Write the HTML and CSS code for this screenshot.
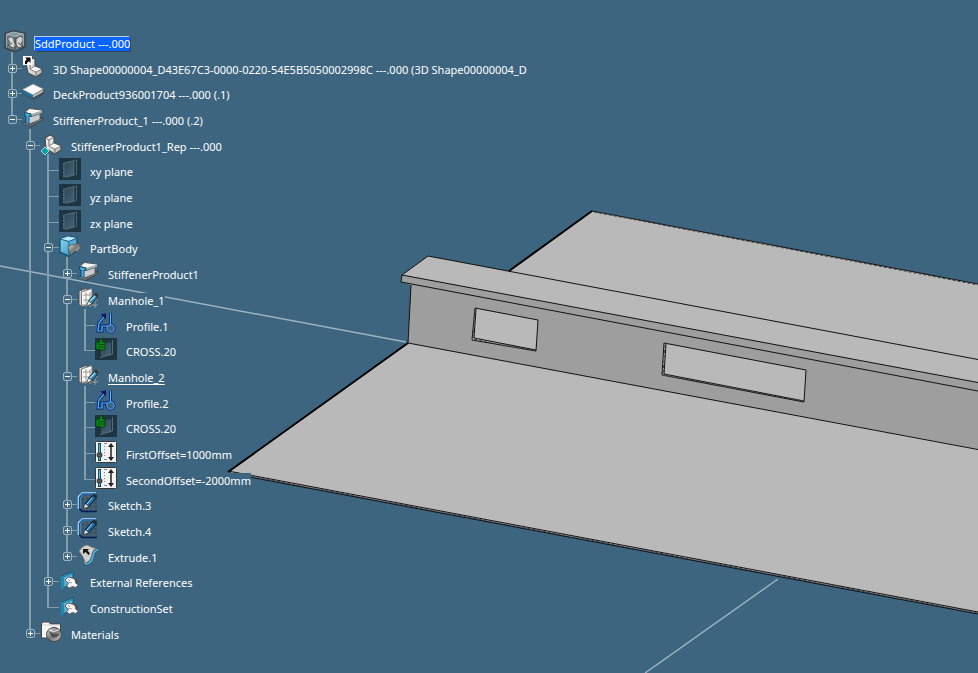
FILE: index.html
```html
<!DOCTYPE html>
<html lang="en">
<head>
<meta charset="utf-8">
<title>SddProduct</title>
<link rel="stylesheet" href="styles.css">
</head>
<body>
<svg class="defs" aria-hidden="true">
  <defs>
    <linearGradient id="steel" x1="0" y1="0" x2="1" y2="1"><stop offset="0" stop-color="#ffffff"/><stop offset="1" stop-color="#b5b5b5"/></linearGradient>
    <linearGradient id="dark-steel" x1="0" y1="0" x2="1" y2="1"><stop offset="0" stop-color="#e8e8e8"/><stop offset=".5" stop-color="#777"/><stop offset="1" stop-color="#d0d0d0"/></linearGradient>
    <linearGradient id="cyan" x1="0" y1="0" x2="1" y2="1"><stop offset="0" stop-color="#8fdcf7"/><stop offset="1" stop-color="#2b88b8"/></linearGradient>
    <linearGradient id="glass" x1="0" y1="0" x2="1" y2="1"><stop offset="0" stop-color="#2c4656"/><stop offset="1" stop-color="#466375"/></linearGradient>
  </defs>
  <symbol id="i-root" viewBox="0 0 22 22">
    <path d="M9 .8 21 3.500V17L11 21.500 1 18V3.500Z" fill="#6d818d" stroke="#3b4449" stroke-width="1.600"/>
    <path d="M9 2 19.500 4 11 6.500 2.500 4.200Z" fill="#8797a0" stroke="#b9c4ca" stroke-width=".7"/>
    <path d="M4 8 7 6.500 10 9v3l2 2v3l-3 1-5-3 2-3-2-2ZM12 9l4-3 3 2v3l-2 2 2 3-4 2-3-3Z" fill="#cfcfcf" stroke="#444" stroke-width=".8"/>
    <path d="M11 7V21M2 17 8 13M14 13l6 4" fill="none" stroke="#40484c" stroke-width=".9"/>
    <path d="M2.500 5v12M19.500 5v11" stroke="#a4b1b9" stroke-width=".8"/>
  </symbol>
  <symbol id="i-seat" viewBox="0 0 22 22">
    <path d="M4 5 9 2l4 2v6l7 3v4l-6 4-9-5Z" fill="url(#steel)" stroke="#4c4c4c" stroke-width="1.200"/>
    <path d="M4 5l4 2v6l6 3v5M8 7l5-3M8 13l5-3M14 16l6-3" fill="none" stroke="#707070" stroke-width="1"/>
    <path d="M8.500 13 13 10.500 19 13 14 15.500Z" fill="#f5f5f5"/>
  </symbol>
  <symbol id="i-shape" viewBox="0 0 22 22">
    <path d="M4 7 9 2l4 1v7l7 3v4l-6 4-8-4Z" fill="url(#steel)" stroke="#4c4c4c" stroke-width="1.200"/>
    <path d="M8 8v5l6 3v5M8 13l5-3M14 16l6-3" fill="none" stroke="#707070"/>
    <path d="M8.500 13 13 10.500 19 13 14 15.500Z" fill="#f5f5f5"/>
    <path d="M1 0h9v9H1Z" fill="#fff"/><path d="M3 1.500h5.500V7L6.800 5.300 5 7v1H3V5.500L4.700 3.200Z" fill="#000"/>
  </symbol>
  <symbol id="i-rep" viewBox="0 0 22 22">
    <use href="#i-seat" x="1" width="22" height="22"/>
    <path d="M5 14 9 18 5 22 1 18Z" fill="#00a7a7" stroke="#e6f3f3" stroke-width=".7"/>
  </symbol>
  <symbol id="i-deck" viewBox="0 0 22 22">
    <path d="M0 9v4l11 6 11-6V9Z" fill="#4a4a4a"/><path d="M.5 9v3.500L11 18v-4Z" fill="#167299"/>
    <path d="M11 14.500v2L21 11V9Z" fill="#c4c4c4"/>
    <path d="M.5 8.500 11 3l10.500 5L11 14Z" fill="#fafafa" stroke="#7d8d92" stroke-width=".8"/>
  </symbol>
  <symbol id="i-stiff" viewBox="0 0 22 22">
    <path d="M0 15.500 7 13l14.500-3.500v3L9 20.500Z" fill="#43484b"/>
    <path d="M6.500 8v9.500L18 12.500V5Z" fill="#c9cdcf" stroke="#555" stroke-width=".8"/>
    <path d="M2.500 5.500 7.500 1.500 20 3v3L9 9.500V7Z" fill="#f6f6f6" stroke="#4f5658"/>
    <path d="M9 7 20 3.500v2.300L9 9.300Z" fill="#a7adaf"/>
    <path d="M2.500 5.500 9 7v2.500L7 9v8.500L4 16V9l-1.500-.5Z" fill="#45add6" stroke="#0d4360" stroke-width=".9"/>
    <path d="M2 16 8.500 18.500 20 12" fill="none" stroke="#8a9194" stroke-width=".8"/>
  </symbol>
  <symbol id="i-plane" viewBox="0 0 22 22">
    <path d="M0 0h22v22H0Z" fill="#1f3441"/>
    <path d="M5 5 15 3v14L5 19Z" fill="url(#glass)" stroke="#607c8c" stroke-width=".6"/>
    <path d="M7 4.500 17.500 2v14.500L7 19.500" fill="none" stroke="#49687b" stroke-width=".8"/>
    <path d="M4.500 5v14M17.500 2v14" stroke="#4e7185" stroke-width=".8" stroke-dasharray="3 1"/>
  </symbol>
  <symbol id="i-body" viewBox="0 0 22 22">
    <path d="M1 4 9 1l9 2v13l-8 5-9-4Z" fill="url(#cyan)" stroke="#124c68" stroke-width="1.200"/>
    <path d="M1.500 4 9 1.500 17.500 3 10 6Z" fill="#b9eafb"/><path d="M1 4l9 2.500 8-3.300M10 6.500V21" fill="none" stroke="#19607f" stroke-width="1"/>
    <path d="M9 12l4-3 2 1 5-2 1.500 5L18 17l-2-1-4 4-2-4Z" fill="url(#dark-steel)" stroke="#4e4e4e" stroke-width=".8"/>
  </symbol>
  <symbol id="i-manhole" viewBox="0 0 22 22">
    <path d="M2 4 10 1v16l-6 2-2-1Z" fill="#d5d5d5" stroke="#4d4d4d"/><path d="M4.500 5 14.500 1.500 15 3v13L4.500 19.500Z" fill="#fafafa" stroke="#666" stroke-width=".9"/>
    <path d="M6 8h15M6 13h15M5 18h16M9 5v15M13 5v15M18 6v15" stroke="#9b9b9b" stroke-width="1" fill="none"/>
    <path d="M10 19l1.500-5 6-7 3.500 3-6.500 7Z" fill="#2d83ab" stroke="#222"/><path d="M17 7l2-1.500 2.500 2.500L20 10Z" fill="#333"/><path d="M10 19l1.500-4.500 3 2Z" fill="#f5e2ce"/><path d="M13 14l5-5" stroke="#a9e3fa" stroke-width="1.300"/>
  </symbol>
  <symbol id="i-profile" viewBox="0 0 22 22">
    <g fill="none" stroke-linejoin="miter">
      <path d="M9.500 3.500 4 10 3 18H7V13h5l1 3M15.500.5V12" stroke="#10156e" stroke-width="2.800"/>
      <circle cx="15.500" cy="15.500" r="3.700" stroke="#10156e" stroke-width="2.800"/>
      <path d="M9.500 3.500 4 10 3 18H7V13h5l1 3M15.500.5V12" stroke="#45c4f5" stroke-width="1.200"/>
      <circle cx="15.500" cy="15.500" r="3.700" fill="#3d657f" stroke="#4a9cf5" stroke-width="1.200"/>
    </g>
    <path d="M5.500 1.500 11 .3V6Z" fill="#10156e"/>
  </symbol>
  <symbol id="i-cross" viewBox="0 0 22 22">
    <path d="M0 0h22v22H0Z" fill="#1f3441"/>
    <path d="M6 6 16 4v13L6 19Z" fill="url(#glass)"/><path d="M5 20 7 19 17.500 16V2" fill="none" stroke="#54758a" stroke-width=".9"/>
    <path d="M1 4h3l2-3.500h2L7 4h3v8H4l-3-1Z" fill="#0b8a16" stroke="#05350a" stroke-width=".8"/><path d="M4 4v8M5 6.500h5M5 9h5" stroke="#054a0b"/>
  </symbol>
  <symbol id="i-param" viewBox="0 0 22 22">
    <rect x=".5" y=".5" width="21" height="21" rx="1" fill="#f3f3f3" stroke="#363636"/>
    <path d="M4.500 2v18" stroke="#10394c" stroke-width="3"/><path d="M4.500 3v16" stroke="#54b7e6" stroke-width="1.400"/>
    <rect x="2" y="12" width="5" height="4" rx="1" fill="#555" stroke="#1d1d1d" stroke-width=".6"/>
    <path d="M9 2.500h3M9 5.500h1M9 8.500h1M9 11.500h1M9 14.500h1M9 18.500h3" stroke="#888"/>
    <path d="M16 4v14" stroke="#222" stroke-width="1.500"/><path d="M13 6 16 2l3 4ZM13 16l3 4 3-4Z" fill="#222"/>
  </symbol>
  <symbol id="i-sketch" viewBox="0 0 22 22">
    <path d="M5 2h15v17H5Z" fill="#3a5364"/><path d="M5 5h15M5 9h15M5 13h15M5 17h15M8 2v17M12 2v17M16 2v17" stroke="#536c7b" stroke-width=".7"/>
    <path d="M2 17V5L5.500 1.500H19" stroke="#b7dcf2" stroke-width="2.600" fill="none"/>
    <path d="M2.500 17V5.500L5.500 2H19" stroke="#0754a3" stroke-width="1.300" fill="none"/><path d="M2.500 16.500 5 19.500H20" stroke="#071b5a" stroke-width="1.600" fill="none"/>
    <path d="M7 16l1-4 8-9 3.500 3-8 8.500Z" fill="#176daa" stroke="#111"/><path d="M15 3.500l2-2 3.300 2.500L18.500 6.500Z" fill="#292929"/><path d="M7 16l1-4 3.300 2.800Z" fill="#f6ead7"/><path d="M10 12l5-6" stroke="#a7e1ff"/>
  </symbol>
  <symbol id="i-extrude" viewBox="0 0 22 22">
    <path d="M2 7Q6 1 10 1q4 2 7 3 2 0 4 2-4 0-5 3-2 10-7 11-3-1-1-3-3-6-6-10Z" fill="#d3d1cc" stroke="#777" stroke-width=".8"/>
    <path d="M9 20q6-1 7-8 1-6 5-6" stroke="#1e5775" stroke-width="3.500" fill="none"/><path d="M9 20q6-1 7-8 1-6 5-6" stroke="#5aa9cf" stroke-width="2" fill="none"/>
    <path d="M6 5h6l-1.500 1.500L13 9.500 11.500 11 8.500 8 6 10Z" fill="#171717"/>
  </symbol>
  <symbol id="i-set" viewBox="0 0 22 22">
    <path d="M3 7 14 2.500v12L3 19.500Z" fill="url(#cyan)" stroke="#12516e"/><path d="M2.500 7v12.500l2-1V8L14 4" fill="none" stroke="#2089ae" stroke-width="1.500"/>
    <path d="M6 11l3-3 4 1 3 1 1.500 2-1 2 3 2-3 2.500-3-1-3 1.500-3-2 2-2.500Z" fill="#f7f7f7" stroke="#555" stroke-width=".9"/><path d="M15 10l2-.5 3 4-2.500 1.500Z" fill="#4f4f4f"/><path d="M9 13l4 1M9 10l2 2" stroke="#777" stroke-width=".7"/>
  </symbol>
  <symbol id="i-material" viewBox="0 0 22 22">
    <path d="M1.500 3l1-2h6l2 2h10v14h-19Z" fill="#f8f8f8" stroke="#444"/><path d="M2 4h18" stroke="#ccc"/>
    <ellipse cx="14" cy="13.500" rx="7.500" ry="7" fill="url(#dark-steel)" stroke="#434343"/><path d="M8 9q4 5 12 4-4 5-8 3Z" fill="#4f4f4f"/><path d="M9 9q4 3 10 0" stroke="#eee" fill="none"/>
  </symbol>
</svg>

<main class="viewport">
  <svg class="scene" viewBox="0 0 978 673" preserveAspectRatio="xMinYMin slice" role="img" aria-label="Deck plate with stiffener">
    <path class="axis" d="M0 266 406 342M645 673 778 579"/>
    <path class="light" d="M592 211 978 284V613L228 472 408 343 509 271Z"/>
    <path class="web" d="M401 282 978 391V449L408 343 411 285Z"/>
    <path class="light" d="M428 256 978 359.500V382.500L402 275Z"/>
    <path class="web" d="M402 275 978 382.500V391L401 282Z"/>
    <path class="light" d="M475 308 538 320 536 351 472 340ZM664 343 806 370 804 402 662 375Z"/>
    <path class="edge" d="M592 211 978 284M428 256 978 359.500M402 275 978 382.500M401 282 978 391M408 343 978 449.500M428 256 402 275 401 282M411 285 408 343M228 471 978 612M228 473 978 614M475 308 538 320 536 351 472 340ZM476 309 474 338 536 350M664 343 806 370 804 402 662 375ZM666 344 664 374 804 401"/>
    <path class="rim" d="M592 211 509 271M408 343 228 472"/>
    <path class="shade" d="M594 212 978 285M228 472 978 613M475 310 473 339M474 339 536 351M665 345 663 374M663 375 804 401"/>
  </svg>

  <ul class="tree">
    <li class="row"><svg class="icon"><use href="#i-root"/></svg><span class="label selected">SddProduct ---.000</span></li>
    <li class="row"><span class="guide tee"><button class="toggle closed" aria-label="Expand"></button></span><svg class="icon"><use href="#i-shape"/></svg><span class="label">3D Shape00000004_D43E67C3-0000-0220-54E5B5050002998C ---.000 (3D Shape00000004_D</span></li>
    <li class="row"><span class="guide tee"><button class="toggle closed" aria-label="Expand"></button></span><svg class="icon"><use href="#i-deck"/></svg><span class="label">DeckProduct936001704 ---.000 (.1)</span></li>
    <li class="row"><span class="guide tee end"><button class="toggle" aria-label="Collapse"></button></span><svg class="icon"><use href="#i-stiff"/></svg><span class="label">StiffenerProduct_1 ---.000 (.2)</span></li>
    <li class="row"><span class="guide blank"></span><span class="guide tee"><button class="toggle" aria-label="Collapse"></button></span><svg class="icon"><use href="#i-rep"/></svg><span class="label">StiffenerProduct1_Rep ---.000</span></li>
    <li class="row"><span class="guide blank"></span><span class="guide"></span><span class="guide tee"></span><svg class="icon"><use href="#i-plane"/></svg><span class="label">xy plane</span></li>
    <li class="row"><span class="guide blank"></span><span class="guide"></span><span class="guide tee"></span><svg class="icon"><use href="#i-plane"/></svg><span class="label">yz plane</span></li>
    <li class="row"><span class="guide blank"></span><span class="guide"></span><span class="guide tee"></span><svg class="icon"><use href="#i-plane"/></svg><span class="label">zx plane</span></li>
    <li class="row"><span class="guide blank"></span><span class="guide"></span><span class="guide tee"><button class="toggle" aria-label="Collapse"></button></span><svg class="icon"><use href="#i-body"/></svg><span class="label">PartBody</span></li>
    <li class="row"><span class="guide blank"></span><span class="guide"></span><span class="guide"></span><span class="guide tee"><button class="toggle closed" aria-label="Expand"></button></span><svg class="icon"><use href="#i-stiff"/></svg><span class="label">StiffenerProduct1</span></li>
    <li class="row"><span class="guide blank"></span><span class="guide"></span><span class="guide"></span><span class="guide tee"><button class="toggle" aria-label="Collapse"></button></span><svg class="icon"><use href="#i-manhole"/></svg><span class="label">Manhole_1</span></li>
    <li class="row"><span class="guide blank"></span><span class="guide"></span><span class="guide"></span><span class="guide"></span><span class="guide tee"></span><svg class="icon"><use href="#i-profile"/></svg><span class="label">Profile.1</span></li>
    <li class="row"><span class="guide blank"></span><span class="guide"></span><span class="guide"></span><span class="guide"></span><span class="guide tee end"></span><svg class="icon"><use href="#i-cross"/></svg><span class="label">CROSS.20</span></li>
    <li class="row"><span class="guide blank"></span><span class="guide"></span><span class="guide"></span><span class="guide tee"><button class="toggle" aria-label="Collapse"></button></span><svg class="icon"><use href="#i-manhole"/></svg><span class="label active">Manhole_2</span></li>
    <li class="row"><span class="guide blank"></span><span class="guide"></span><span class="guide"></span><span class="guide"></span><span class="guide tee"></span><svg class="icon"><use href="#i-profile"/></svg><span class="label">Profile.2</span></li>
    <li class="row"><span class="guide blank"></span><span class="guide"></span><span class="guide"></span><span class="guide"></span><span class="guide tee"></span><svg class="icon"><use href="#i-cross"/></svg><span class="label">CROSS.20</span></li>
    <li class="row"><span class="guide blank"></span><span class="guide"></span><span class="guide"></span><span class="guide"></span><span class="guide tee"></span><svg class="icon"><use href="#i-param"/></svg><span class="label">FirstOffset=1000mm</span></li>
    <li class="row"><span class="guide blank"></span><span class="guide"></span><span class="guide"></span><span class="guide"></span><span class="guide tee end"></span><svg class="icon"><use href="#i-param"/></svg><span class="label">SecondOffset=-2000mm</span></li>
    <li class="row"><span class="guide blank"></span><span class="guide"></span><span class="guide"></span><span class="guide tee"><button class="toggle closed" aria-label="Expand"></button></span><svg class="icon"><use href="#i-sketch"/></svg><span class="label">Sketch.3</span></li>
    <li class="row"><span class="guide blank"></span><span class="guide"></span><span class="guide"></span><span class="guide tee"><button class="toggle closed" aria-label="Expand"></button></span><svg class="icon"><use href="#i-sketch"/></svg><span class="label">Sketch.4</span></li>
    <li class="row"><span class="guide blank"></span><span class="guide"></span><span class="guide"></span><span class="guide tee end"><button class="toggle closed" aria-label="Expand"></button></span><svg class="icon"><use href="#i-extrude"/></svg><span class="label">Extrude.1</span></li>
    <li class="row"><span class="guide blank"></span><span class="guide"></span><span class="guide tee"><button class="toggle closed" aria-label="Expand"></button></span><svg class="icon"><use href="#i-set"/></svg><span class="label">External References</span></li>
    <li class="row"><span class="guide blank"></span><span class="guide"></span><span class="guide tee end"></span><svg class="icon"><use href="#i-set"/></svg><span class="label">ConstructionSet</span></li>
    <li class="row"><span class="guide blank"></span><span class="guide tee end"><button class="toggle closed" aria-label="Expand"></button></span><svg class="icon"><use href="#i-material"/></svg><span class="label">Materials</span></li>
  </ul>
</main>
</body>
</html>
```
FILE: styles.css
```css
:root {
  --bg: #3d657f;
  --line: #839dad;
}

* { box-sizing: border-box; }

body {
  margin: 0;
  background: var(--bg);
  color: #fff;
  font: 11px/16px "Noto Sans", sans-serif;
}

.defs { position: absolute; width: 0; height: 0; }

.viewport {
  position: relative;
  min-height: 100vh;
  padding: 30px 4px 12px;
  overflow: hidden;
}

.scene { position: absolute; inset: 0; width: 100%; height: 100%; }
.scene path { fill: none; }
.scene .light { fill: #b9b9b9; }
.scene .web { fill: #9e9e9e; }
.scene .edge { stroke: #111; stroke-width: 1; }
.scene .rim { stroke: #000; stroke-width: 2; }
.scene .shade { stroke: #444; stroke-width: 1; stroke-dasharray: 3 2; }
.scene .axis { stroke: #9db3c0; stroke-width: 1.5; }

.tree { position: relative; margin: 0; padding: 0; list-style: none; }

/* Rows share a pitch slightly under 26px, so every third one is shorter. */
.row { display: flex; align-items: flex-start; height: 26px; }
.row:nth-child(3n+2):nth-child(-n+8),
.row:nth-child(3n+12) { height: 25px; }

.guide { position: relative; flex: none; width: 18px; height: 100%; }
.guide:nth-child(3) { width: 19px; }
.guide::before {
  content: "";
  position: absolute;
  left: 7px;
  top: -4px;
  bottom: 0;
  width: 2px;
  background: var(--line);
}
.guide.blank::before { display: none; }
.guide.end::before { bottom: auto; height: 17px; }
.guide.tee::after {
  content: "";
  position: absolute;
  left: 8px;
  right: 0;
  top: 12px;
  height: 1px;
  background: var(--line);
}

.toggle {
  position: absolute;
  z-index: 1;
  left: 4px;
  top: 8px;
  width: 9px;
  height: 9px;
  padding: 0;
  border: 1px solid #9db2bf;
  border-radius: 2px;
  background: linear-gradient(#fff, #fff) center / 5px 1px no-repeat #466c85;
}
.toggle.closed {
  background:
    linear-gradient(#fff, #fff) center / 5px 1px no-repeat,
    linear-gradient(#fff, #fff) center / 1px 5px no-repeat #466c85;
}

.icon { position: relative; z-index: 1; flex: none; width: 22px; height: 22px; overflow: visible; }

.label {
  margin: 6px 0 0 9px;
  background: var(--bg);
  white-space: nowrap;
}
.selected {
  margin-top: 7px;
  background: #0a64ff;
  line-height: 14px;
  box-shadow: -1px -1px #b5cbe0, 1px 1px #34424d;
}
.active { text-decoration: underline; text-underline-offset: 2px; }
```
